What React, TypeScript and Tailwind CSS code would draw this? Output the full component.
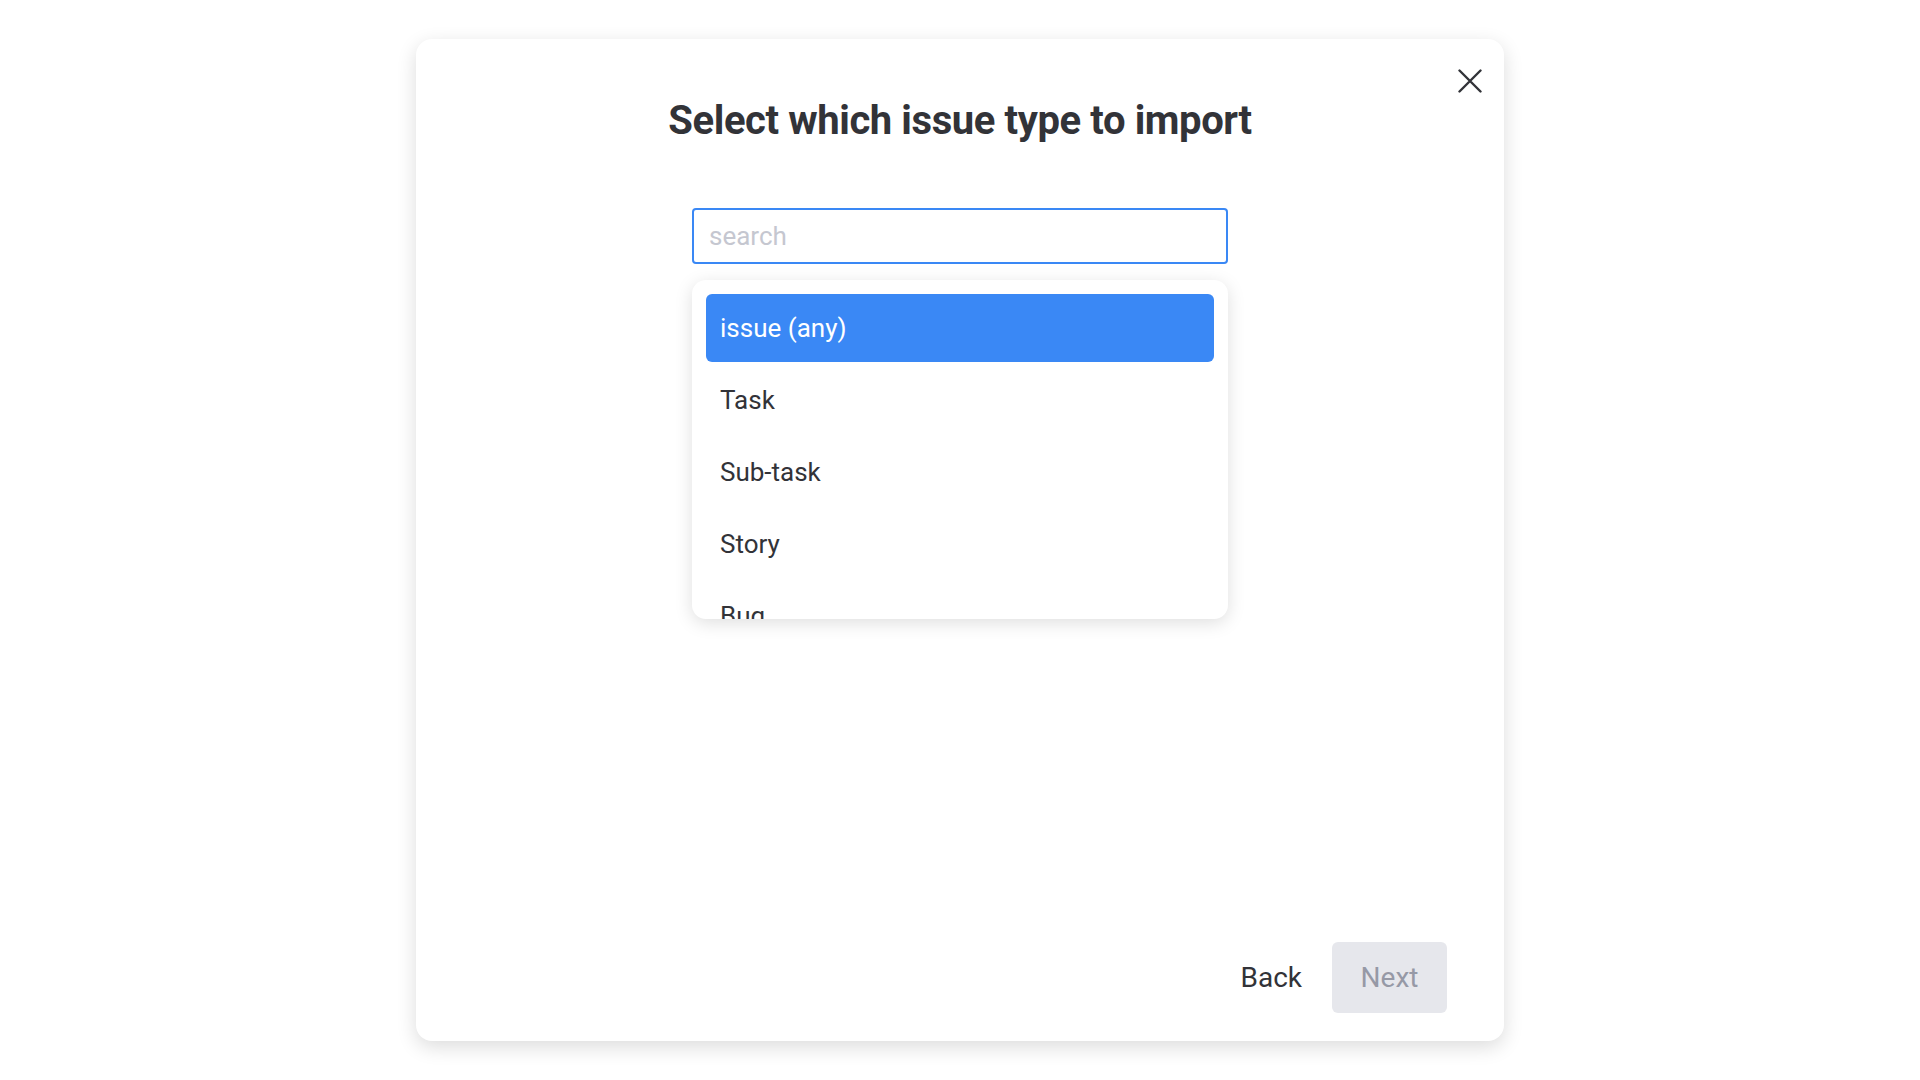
import { useState } from "react";

const issueTypes = ["issue (any)", "Task", "Sub-task", "Story", "Bug", "Epic"];

const CloseIcon = () => (
  <svg width="24" height="24" viewBox="0 0 24 24" fill="none">
    <path
      d="M1.5 1.5L22.5 22.5M22.5 1.5L1.5 22.5"
      stroke="#323338"
      strokeWidth="2.4"
      strokeLinecap="round"
    />
  </svg>
);

export default function App() {
  const [selected, setSelected] = useState(0);
  const [query, setQuery] = useState("");

  const items = issueTypes.filter((t) =>
    t.toLowerCase().includes(query.toLowerCase())
  );

  return (
    <div
      className="flex h-screen w-full items-center justify-center bg-white"
      style={{ fontFamily: "Roboto, 'Liberation Sans', sans-serif" }}
    >
      <div className="relative flex h-[1002px] w-[1088px] flex-col items-center rounded-2xl bg-white pt-[58px] shadow-[0_6px_20px_rgba(0,0,0,0.14)]">
        <button className="absolute right-[22px] top-[30px] p-0">
          <CloseIcon />
        </button>

        <h1 className="text-[40px] font-bold leading-[48px] tracking-[-0.01em] text-[#323338]">
          Select which issue type to import
        </h1>

        <input
          autoFocus
          value={query}
          onChange={(e) => setQuery(e.target.value)}
          placeholder="search"
          className="mt-[63px] h-[56px] w-[536px] rounded-[4px] border-2 border-[#3a88f5] px-[15px] text-[26px] text-[#323338] caret-[#323338] outline-none placeholder:text-[#c5c7d0]"
        />

        <div className="mt-4 h-[339px] w-[536px] overflow-hidden rounded-[14px] bg-white shadow-[0_4px_18px_rgba(0,0,0,0.13)]">
          <ul className="flex flex-col gap-1 p-[14px]">
            {items.map((item, i) => (
              <li
                key={item}
                onClick={() => setSelected(i)}
                className={
                  i === selected
                    ? "flex h-[68px] shrink-0 cursor-pointer items-center rounded-[6px] bg-[#3a88f5] px-[14px] text-[26px] text-white"
                    : "flex h-[68px] shrink-0 cursor-pointer items-center rounded-[6px] px-[14px] text-[26px] text-[#323338]"
                }
              >
                {item}
              </li>
            ))}
          </ul>
        </div>

        <div className="mt-auto flex w-full items-center justify-end gap-[30px] pb-[28px] pr-[57px]">
          <button className="text-[28px] text-[#323338]">Back</button>
          <button className="h-[71px] w-[115px] rounded-[6px] bg-[#e6e7ec] text-[28px] text-[#9699a6]">
            Next
          </button>
        </div>
      </div>
    </div>
  );
}
